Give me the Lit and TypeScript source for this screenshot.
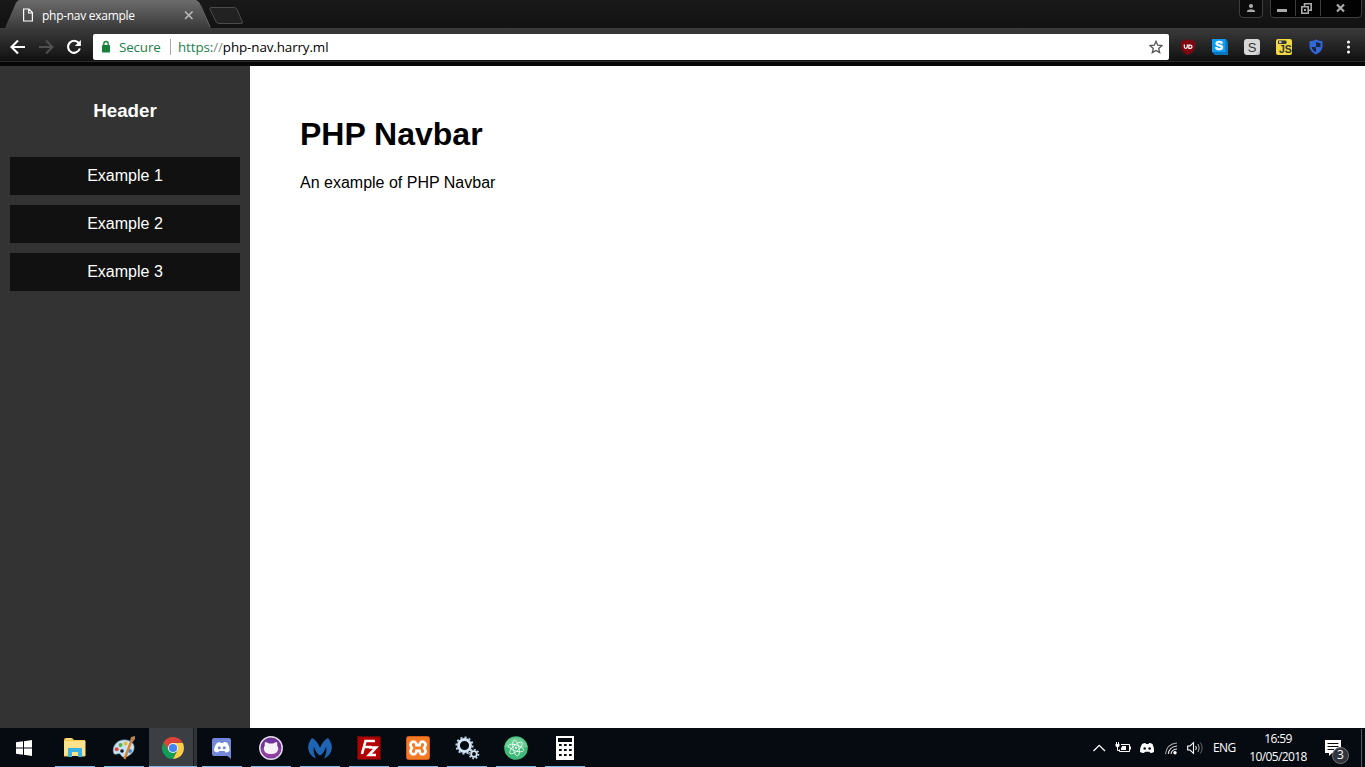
import { LitElement, html, css, svg } from 'lit';
import { customElement, property } from 'lit/decorators.js';
import { classMap } from 'lit/directives/class-map.js';

const icon = (w: number, h: number, body: unknown) =>
  html`<svg width=${w} height=${h} viewBox="0 0 ${w} ${h}" fill="none">${body}</svg>`;

/* ---------- browser chrome ---------- */

@customElement('browser-tabs')
class BrowserTabs extends LitElement {
  static styles = css`
    :host { display: flex; height: 28px; background: linear-gradient(#191919, #121212); font: 12px 'Open Sans', sans-serif; color: #fff; justify-content: space-between; }
    svg { display: block; flex: none; }
    .strip { display: grid; grid-template-columns: 250px; }
    .shape, .content { grid-area: 1 / 1; }
    .content { display: flex; align-items: center; height: 28px; padding: 2px 0 0 22px; box-sizing: border-box; }
    .title { width: 141px; margin-left: 8px; letter-spacing: -0.28px; white-space: nowrap; }
    .controls { display: flex; gap: 5px; padding-right: 2px; }
  `;
  render() {
    return html`
      <div class="strip">
        <div class="shape">${icon(250, 28, svg`
          <defs>
            <linearGradient id="t" x2="0" y2="1"><stop stop-color="#6c6c6c"/><stop offset="1" stop-color="#3b3b3b"/></linearGradient>
          </defs>
          <path d="M5 28L15 5Q17 0 20 0H195Q198 0 200 5L211 28Z" fill="url(#t)"/>
          <path d="M195.500 .5Q199 1 201 6L210 27" stroke="#777" opacity=".7"/>
          <path d="M211 7.500H234Q236 7.500 237 9.500L242.500 22Q243 23.500 241 23.500H219Q217 23.500 216 21.500L210 9.500Q209.500 7.500 211 7.500Z" fill="#222" stroke="#4b4b4b"/>`)}</div>
        <div class="content">
          ${icon(12, 14, svg`<path d="M1.600 1H7L10.400 4.600V13H1.600ZM6.700 1V5H10.400" stroke="#fff" stroke-width="1.200"/>`)}
          <span class="title">php-nav example</span>
          ${icon(12, 12, svg`<path d="M2 2.500L9.500 10M9.500 2.500L2 10" stroke="#bdbdbd" stroke-width="1.500"/>`)}
        </div>
      </div>
      <div class="controls">
        ${icon(26, 18, svg`<path d="M1.500 0V14Q1.500 17.500 5 17.500H21Q24.500 17.500 24.500 14V0" fill="#0b0b0b" stroke="#3d3d3d"/>
          <circle cx="13" cy="6" r="2.100" fill="#aaa"/><path d="M9 12V10.700Q10 9.200 13 9.200T17 10.700V12Z" fill="#aaa"/>`)}
        ${icon(94, 18, svg`<path d="M1.500 0V14Q1.500 17.500 5 17.500H89Q92.500 17.500 92.500 14V0" fill="#020202" stroke="#3d3d3d"/>
          <path d="M26.500 0V16M51.500 0V16" stroke="#3d3d3d"/>
          <path d="M8 9H18V12H8Z" fill="#aaa"/>
          <path d="M32.800 6.800H39.200V13.200H32.800ZM35.500 6V3.800H42.200V10.200H40" stroke="#aaa" stroke-width="1.600"/><path d="M35 9H37V11H35Z" fill="#aaa"/>
          <path d="M68 4.500L75 11.500M75 4.500L68 11.500" stroke="#aaa" stroke-width="2.200"/>`)}
      </div>`;
  }
}

@customElement('browser-toolbar')
class BrowserToolbar extends LitElement {
  static styles = css`
    :host { display: flex; align-items: center; height: 38px; padding: 0 0 0 8px; box-sizing: border-box; background: linear-gradient(#3b3b3b 0, #111 33px, #2b2b2b 33px, #2b2b2b 34px, #070707 34px); }
    svg { display: block; flex: none; }
    .nav { display: flex; gap: 8px; width: 85px; }
    .address { display: flex; align-items: center; box-sizing: border-box; width: 1076px; height: 26px; padding: 0 6px 0 8px; border-radius: 2px; background: #fff; font: 13.4px/26px 'Open Sans', sans-serif; color: #000; }
    .secure { color: #238048; margin-left: 8px; width: 50px; letter-spacing: -0.15px; }
    .rule { width: 1px; height: 16px; background: #aaa; margin: 0 7px 0 1px; }
    .url { flex: 1; letter-spacing: -0.11px; }
    .scheme { color: #238048; }
    .slashes { color: #888; }
    .extensions { display: flex; gap: 16px; margin-left: 11px; }
    .glyph { font-family: 'Liberation Sans', Arial, sans-serif; text-anchor: middle; }
    .bold { font-weight: 700; }
  `;
  render() {
    return html`
      <div class="nav">
        ${icon(20, 20, svg`<path d="M17 10H4M10 3.500L3.500 10L10 16.500" stroke="#fff" stroke-width="2.100"/>`)}
        ${icon(20, 20, svg`<path d="M3 10H16M10 3.500L16.500 10L10 16.500" stroke="#505050" stroke-width="2"/>`)}
        ${icon(20, 20, svg`<path d="M14.700 6A6 6 0 1 0 15.800 11.500" stroke="#fff" stroke-width="2.100"/><path d="M16.900 3V9H10.900Z" fill="#fff"/>`)}
      </div>
      <div class="address">
        ${icon(10, 14, svg`<rect x="1" y="5" width="8" height="7.500" rx=".7" fill="#168039"/><path d="M2.800 6V3.700A2.200 2.200 0 0 1 7.200 3.700V6" stroke="#168039" stroke-width="1.300"/>`)}
        <span class="secure">Secure</span><span class="rule"></span>
        <span class="url"><span class="scheme">https:</span><span class="slashes">//</span>php-nav.harry.ml</span>
        ${icon(14, 14, svg`<path d="M7 1.300L8.700 5.200L12.900 5.600L9.700 8.400L10.700 12.600L7 10.400L3.300 12.600L4.300 8.400L1.100 5.600L5.300 5.200Z" stroke="#555" stroke-width="1.300"/>`)}
      </div>
      <div class="extensions">
        ${icon(16, 16, svg`<path d="M8 0Q11 2 15 2V8Q15 13 8 16Q1 13 1 8V2Q5 2 8 0Z" fill="#800610"/><path d="M4.300 5.500V7.800Q4.300 9.300 5.800 9.300T7.300 7.800V5.500" stroke="#fff" stroke-width="1.200"/><path d="M8.800 6.100H10.200Q12 6.100 12 7.700T10.200 9.300H8.800Z" stroke="#fff" stroke-width="1.200"/>`)}
        ${icon(16, 16, svg`<path d="M0 0H14L16 3V16H3L0 13Z" fill="#0876be"/><path d="M0 0H13.500V13H0Z" fill="#129bf2"/><text class="glyph bold" x="7" y="11" font-size="12" fill="#fff" stroke="#fff" stroke-width=".6">S</text>`)}
        ${icon(16, 16, svg`<rect width="16" height="16" rx="3" fill="#d8d8d8"/><path d="M11 16L16 11V13Q16 16 13 16Z" fill="#bcbcbc"/><text class="glyph" x="8" y="12.500" font-size="13" fill="#333">S</text>`)}
        ${icon(16, 16, svg`<rect width="16" height="16" rx="2" fill="#f0d943"/><rect x="2" y="1.500" width="8.500" height="3.500" rx="1" fill="#333"/><path d="M3 2.200H5.500V4.200H3Z" fill="#ccc"/><text class="glyph bold" x="9.300" y="14" font-size="10.500" fill="#333">JS</text>`)}
        ${icon(16, 16, svg`<path d="M8 .5Q11 2.300 14.500 2.300V8Q14 12.700 8 15.500Q2 12.700 1.500 8V2.300Q5 2.300 8 .5Z" fill="#3367d6"/><path d="M8 3Q10 4.100 12.500 4.300V8H8ZM8 8V13.300Q4.300 11.500 3.500 8Z" fill="#17253f"/>`)}
        ${icon(16, 16, svg`<circle cx="8.500" cy="3" r="1.500" fill="#fff"/><circle cx="8.500" cy="8" r="1.500" fill="#fff"/><circle cx="8.500" cy="13" r="1.500" fill="#fff"/>`)}
      </div>`;
  }
}

/* ---------- web page ---------- */

@customElement('site-page')
class SitePage extends LitElement {
  static styles = css`
    :host { display: grid; grid-template-columns: 250px 1fr; background: #fff; font: 16px/18px 'Liberation Sans', Arial, sans-serif; color: #000; }
    .nav { background: #333; padding: 0 10px; display: flex; flex-direction: column; gap: 10px; color: #fff; text-align: center; }
    .header { font-size: 18.72px; line-height: 22px; margin: 34px 0 25px; }
    .link { background: #111; padding: 10px; color: #fff; text-decoration: none; }
    .main { padding: 50px; }
    .title { font-size: 32px; line-height: 36px; margin: 0 0 22px; }
    .copy { margin: 0; }
  `;
  render() {
    return html`
      <nav class="nav">
        <h3 class="header">Header</h3>
        ${[1, 2, 3].map(n => html`<a class="link">Example ${n}</a>`)}
      </nav>
      <main class="main">
        <h1 class="title">PHP Navbar</h1>
        <p class="copy">An example of PHP Navbar</p>
      </main>`;
  }
}

/* ---------- taskbar ---------- */

const gear = (cx: number, cy: number, r: number, w: number, n: number) => svg`
  <circle cx=${cx} cy=${cy} r=${r} stroke="#d3e4f3" stroke-width=${w}/>
  <circle cx=${cx} cy=${cy} r=${r + w / 2 + 0.7} stroke="#c3d8ea" stroke-width="1.900" pathLength=${n * 2} stroke-dasharray="1 1"/>`;

const apps = [
  { id: 'explorer', art: svg`
    <path d="M1 4Q1 2 3 2H9L11 4H22V20H1Z" fill="#f6c84b"/><path d="M1 5H22.500V20H1Z" fill="#fde28d"/><path d="M3 3H8" stroke="#fff1b5"/>
    <path d="M5 21V13Q5 12 6 12H18Q19 12 19 13V21H15V16H9V21Z" fill="#38b1e5"/><path d="M1 20H5M19 20H22" stroke="#e7bd53"/>` },
  { id: 'paint', art: svg`
    <path d="M14 4C6 3 1 9 1.300 15Q1.500 19 4.500 18T8.500 18Q10 23 16 20Q23 16 22 10Q20.500 5 14 4Z" fill="#c9e1f2" stroke="#8dafc8" stroke-width=".7"/>
    <circle cx="4.700" cy="13.300" r="2" fill="#db4b40"/><circle cx="8.500" cy="9" r="2" fill="#55ad48"/><circle cx="13.500" cy="7.500" r="1.900" fill="#e7bc35"/><circle cx="10" cy="15" r="1.800" fill="#0b1520"/><circle cx="18" cy="15" r="2" fill="#3f8bd4"/>
    <path d="M12.500 23L19 6" stroke="#d98027" stroke-width="2.300"/><path d="M18 5L19 1L23 0L23 3L20 7Z" fill="#b98451"/>` },
  { id: 'chrome', active: true, art: svg`
    <path d="M12 12L2.470 6.500A11 11 0 0 0 12 23L16.800 14.700Z" fill="#109d58"/>
    <path d="M12 6.800H21.700A11 11 0 0 1 12 23L16.500 14.600Z" fill="#ffcd46"/>
    <path d="M2.470 6.500L7.500 14.500L12 12V6.800H21.700A11 11 0 0 0 2.470 6.500Z" fill="#dc4437"/>
    <circle cx="12" cy="12" r="5.100" fill="#f1f1f1"/><circle cx="12" cy="12" r="4.100" fill="#4285f4"/>` },
  { id: 'discord', art: svg`
    <path d="M2 4Q2 2 4 2H19Q21 2 21 4V23L17.500 20H4Q2 20 2 18Z" fill="#7289da"/>
    <path d="M7 7Q9 6 10 6L10.500 7H13L14 6Q16 6 17.500 7Q20 11 19.500 15Q17.500 16.600 15.500 16.500L14.500 15H9L8 16.500Q5.500 16.300 4 15Q4 10 7 7Z" fill="#fff"/><circle cx="9.300" cy="11.700" r="1.500" fill="#7289da"/><circle cx="14.300" cy="11.700" r="1.500" fill="#7289da"/>` },
  { id: 'github', art: svg`
    <circle cx="12" cy="12" r="11.200" fill="#71349a" stroke="#e4dce9" stroke-width="1.500"/><path d="M2 12A10 10 0 0 0 22 12Z" fill="#9140a2"/>
    <path d="M6 6Q8 6 10 7.500H14Q16 6 18 6Q18.500 8 18.200 9.500Q20.500 13 17.500 16.500Q15.500 18 12 18T6.500 16.500Q3.500 13 5.800 9.500Q5.500 8 6 6Z" fill="#f5f2f7"/>` },
  { id: 'malwarebytes', art: svg`
    <path d="M4 2Q9 4.500 12 12Q15 4.500 20 2Q25 8 23.500 14Q22 20 16 22.500Q19.500 16 18 10.500Q16 17.500 12 19.500Q8 17.500 6 10.500Q4.500 16 8 22.500Q2 20 .5 14Q-1 8 4 2Z" fill="#1e66b5"/>` },
  { id: 'filezilla', art: svg`
    <rect x=".7" y=".7" width="22.600" height="22.600" fill="#b40000" stroke="#780e0e" stroke-width="1.300" stroke-dasharray="1.500 1.500"/>
    <path d="M5 18L8.500 5H18M7 11H14.500M12 11.500H19L12 19H19" stroke="#fff" stroke-width="2.600"/>` },
  { id: 'xampp', art: svg`
    <rect x=".5" y=".5" width="23" height="23" rx="2" fill="#f47a26" stroke="#cf5c12"/>
    <path d="M6 12Q3.500 9 5 7T9 6Q10.500 7.500 10.500 9.200H13.500Q13.500 7.500 15 6Q17.500 5 19 7T18 12Q20.500 15 19 17T15 18Q13.500 16.500 13.500 14.800H10.500Q10.500 16.500 9 18Q6.500 19 5 17T6 12Z" stroke="#fff" stroke-width="2.700"/>` },
  { id: 'services', art: svg`${gear(9.5, 9.5, 6, 2.8, 12)}${gear(19, 18, 2.8, 1.8, 8)}` },
  { id: 'atom', art: svg`
    <circle cx="12" cy="12" r="11.800" fill="#3fb978"/><path d="M.4 11A11.800 11.800 0 0 1 23.600 11Q12 14 .4 11Z" fill="#68cd94"/>
    <g stroke="#e7faee" stroke-width=".9"><ellipse cx="12" cy="12" rx="8" ry="3" transform="rotate(18 12 12)"/><ellipse cx="12" cy="12" rx="8" ry="3" transform="rotate(78 12 12)"/><ellipse cx="12" cy="12" rx="8" ry="3" transform="rotate(138 12 12)"/></g><circle cx="12" cy="12" r="1.100" fill="#fff"/>` },
  { id: 'calculator', art: svg`
    <path d="M3 0H21V24H3Z" fill="#fff"/><path d="M5 2H19V6H5Z" fill="#070b10"/>
    ${[9, 14, 19].map(y => [6, 11, 16].map(x => svg`<rect x=${x} y=${y - 1} width="2.700" height="2" fill="#070b10"/>`))}` },
];

@customElement('task-button')
class TaskButton extends LitElement {
  @property({ attribute: false }) art: unknown;
  @property({ type: Boolean }) active = false;
  static styles = css`
    :host { display: block; }
    .button { width: 48px; height: 39px; padding: 8px 4px 0; box-sizing: border-box; display: flex; flex-direction: column; align-items: center; justify-content: space-between; }
    .active { background: linear-gradient(90deg, #3b3f43 44px, #191d21 44px, #191d21 45px, #303439 45px); padding: 8px 0 0; }
    .line { width: 100%; height: 1px; background: #76b9ed; }
    svg { display: block; overflow: visible; }
  `;
  render() {
    return html`<div class=${classMap({ button: true, active: this.active })}>
      ${icon(24, 24, this.art)}<span class="line"></span></div>`;
  }
}

@customElement('task-bar')
class TaskBar extends LitElement {
  static styles = css`
    :host { display: flex; height: 39px; background: #060b12; color: #fff; font: 12px/16px 'Open Sans', sans-serif; }
    svg { display: block; flex: none; }
    .start { width: 51px; padding: 12px 0 0 16px; box-sizing: border-box; }
    .apps { display: flex; gap: 1px; flex: 1; }
    .tray { display: flex; align-items: center; padding-top: 1px; box-sizing: border-box; }
    .icons { display: flex; gap: 8px; }
    .lang { width: 26px; margin-left: 10px; letter-spacing: -0.55px; }
    .clock { width: 72px; margin-left: 3px; display: flex; flex-direction: column; align-items: center; gap: 2px; letter-spacing: -0.62px; }
    .notes { display: grid; width: 40px; height: 39px; margin-left: 7px; }
    .bubble, .count { grid-area: 1 / 1; }
    .bubble { padding: 11px 0 0 4px; }
    .count { width: 15px; height: 15px; margin: 18px 0 0 11px; border: 1px solid #777; border-radius: 50%; background: #30343a; text-align: center; font-size: 12px; line-height: 14px; }
    .desktop { width: 3px; border-left: 1px solid #555a60; height: 38px; }
  `;
  render() {
    return html`
      <div class="start">${icon(16, 16, svg`<path d="M0 2.300L7 1.300V7.400H0ZM8 1.150L16 0V7.400H8ZM0 8.500H7V14.700L0 13.700ZM8 8.500H16V16L8 14.850Z" fill="#fff"/>`)}</div>
      <div class="apps">${apps.map(a => html`<task-button .art=${a.art} ?active=${a.active}></task-button>`)}</div>
      <div class="tray">
        <div class="icons">
          ${icon(15, 16, svg`<path d="M1.500 11L7.200 5.300L13 11" stroke="#fff" stroke-width="1.300"/>`)}
          ${icon(16, 16, svg`<path d="M6 4.500H14.500V11.500H4.500V9.500M15.500 6.500V9.500M2.500 7V10.500H4.500" stroke="#fff"/><path d="M7 6H11V10H6V8L7 7Z" fill="#fff"/><path d="M.5 4H4.500V6L3.500 7H1.500L.5 6Z" fill="#fff"/><path d="M1.500 2V4M3.500 2V4" stroke="#fff"/>`)}
          ${icon(16, 16, svg`<path d="M3 4Q5 3 6.500 3L7 4H9.500L10 3Q12 3 13.500 4Q15.500 8 15 12Q13 13.200 11.500 13L10.500 11.700H6L5 13Q2.500 13 1 12Q1 7 3 4Z" fill="#fff"/><circle cx="5.700" cy="8.500" r="1.300" fill="#060b12"/><circle cx="10.600" cy="8.500" r="1.300" fill="#060b12"/>`)}
          ${icon(16, 16, svg`<g stroke="#e4e4e4" stroke-width="1.100"><path d="M2.500 14Q3.500 4 14 3" opacity=".75"/><path d="M5.300 14Q6 7 14 6"/><path d="M8 14Q8.500 9.500 14 9"/></g><circle cx="12" cy="12.700" r="1.700" fill="#fff"/>`)}
          ${icon(16, 16, svg`<path d="M.7 6H3L6.500 2.700V13.300L3 10H.7Z" stroke="#fff" stroke-width="1.100"/><path d="M8.700 6Q10 8 8.700 10" stroke="#fff"/><path d="M11 4Q13.500 8 11 12" stroke="#aaa"/><path d="M13.300 2.500Q17 8 13.300 13.500" stroke="#666"/>`)}
        </div>
        <span class="lang">ENG</span>
        <div class="clock"><span>16:59</span><span>10/05/2018</span></div>
        <div class="notes">
          <div class="bubble">${icon(17, 17, svg`<path d="M0 0H16V13H7L4 16V13H0Z" fill="#fff"/><path d="M2.500 3.500H13.500M2.500 6.500H13.500M2.500 9.500H9" stroke="#060b12"/>`)}</div>
          <span class="count">3</span>
        </div>
        <span class="desktop"></span>
      </div>`;
  }
}

@customElement('app-root')
class AppRoot extends LitElement {
  static styles = css`
    :host { display: grid; grid-template-rows: 28px 38px 1fr 39px; width: 100%; height: 100vh; overflow: hidden; }
  `;
  render() {
    return html`<browser-tabs></browser-tabs><browser-toolbar></browser-toolbar><site-page></site-page><task-bar></task-bar>`;
  }
}
